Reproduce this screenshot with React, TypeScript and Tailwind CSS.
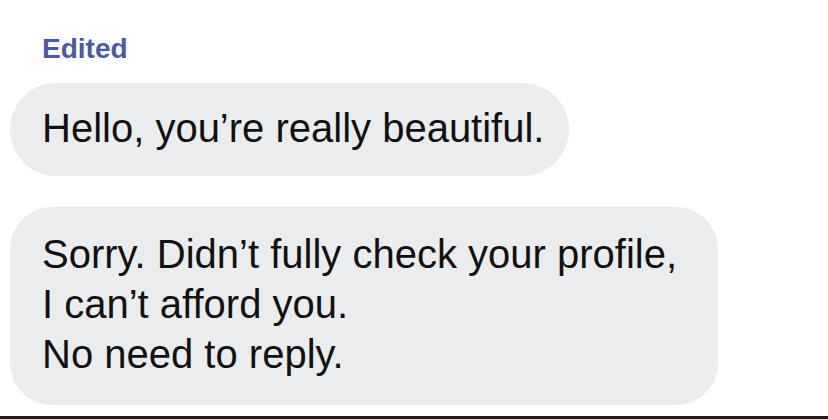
export default function App() {
  return (
    <div
      className="w-[828px] h-[419px] bg-white flex flex-col overflow-hidden"
      style={{ fontFamily: '"Liberation Sans", Arial, sans-serif' }}
    >
      <div className="pl-[42px] pt-[32px] text-[28px] leading-[34px] font-semibold text-[#4a5aa6]">
        Edited
      </div>

      <div className="pl-[10px] mt-[17px] flex flex-col items-start">
        <div className="bg-[#ebecee] rounded-[47px] pl-[32px] pr-[25px] pt-[20px] pb-[23px] text-[40px] leading-[50px] text-[#111111]">
          Hello, you’re really beautiful.
        </div>

        <div className="mt-[31px] w-[708px] bg-[#ebecee] rounded-[42px] pl-[32px] pt-[22px] pb-[26px] text-[40px] leading-[50px] text-[#111111]">
          <p>Sorry. Didn’t fully check your profile,</p>
          <p>I can’t afford you.</p>
          <p>No need to reply.</p>
        </div>
      </div>

      <div className="mt-auto h-[3px] bg-[#1c1c1c]" />
    </div>
  );
}
